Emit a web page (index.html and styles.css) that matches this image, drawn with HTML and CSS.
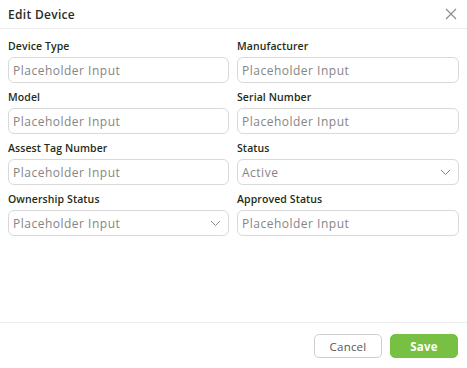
FILE: index.html
```html
<!DOCTYPE html>
<html>
<head>
<meta charset="utf-8">
<link rel="stylesheet" href="styles.css">
</head>
<body>
<div class="modal">
  <header class="head">
    <div class="title">Edit Device</div>
    <button class="close" aria-label="Close">
      <svg width="12" height="12" viewBox="0 0 12 12"><path d="M1 1L11 11M11 1L1 11" stroke="#8a8a8a" stroke-width="1.1" fill="none"/></svg>
    </button>
  </header>
  <main class="body">
    <div class="grid">
      <div class="field"><label>Device Type</label><div class="input">Placeholder Input</div></div>
      <div class="field"><label>Manufacturer</label><div class="input">Placeholder Input</div></div>
      <div class="field"><label>Model</label><div class="input">Placeholder Input</div></div>
      <div class="field"><label>Serial Number</label><div class="input">Placeholder Input</div></div>
      <div class="field"><label>Assest Tag Number</label><div class="input">Placeholder Input</div></div>
      <div class="field"><label>Status</label><div class="input select">Active<svg class="chev" width="11" height="7" viewBox="0 0 11 7"><path d="M1 1L5.5 5.5L10 1" stroke="#8a8a8a" stroke-width="1" fill="none"/></svg></div></div>
      <div class="field"><label>Ownership Status</label><div class="input select">Placeholder Input<svg class="chev" width="11" height="7" viewBox="0 0 11 7"><path d="M1 1L5.5 5.5L10 1" stroke="#8a8a8a" stroke-width="1" fill="none"/></svg></div></div>
      <div class="field"><label>Approved Status</label><div class="input">Placeholder Input</div></div>
    </div>
  </main>
  <footer class="foot">
    <button class="btn cancel">Cancel</button>
    <button class="btn save">Save</button>
  </footer>
</div>
</body>
</html>
```
FILE: styles.css
```css
html, body { margin: 0; padding: 0; background: #fff; }
body { font-family: "Open Sans", "Liberation Sans", sans-serif; }
.modal { display: flex; flex-direction: column; height: 368px; width: 467px; box-sizing: border-box; }
.head { height: 29px; box-sizing: border-box; border-bottom: 1px solid #ededed; display: flex; align-items: center; justify-content: space-between; padding: 0 10px 0 8px; }
.title { font-size: 12px; font-weight: 600; color: #2b2b2b; letter-spacing: 0.3px; }
.close { border: 0; background: none; padding: 0; width: 12px; height: 12px; display: flex; }
.body { flex: 1; padding: 9px 8px 0 8px; }
.grid { display: grid; grid-template-columns: 221px 222px; column-gap: 8px; row-gap: 6px; }
.field { display: flex; flex-direction: column; }
.field label { font-size: 10.5px; font-weight: 600; color: #1f2d17; line-height: 16px; margin-bottom: 3px; letter-spacing: 0.1px; }
.input { height: 26px; box-sizing: border-box; border: 1px solid #d9d9d9; border-radius: 6px; padding: 0 4px 0 4px; display: flex; align-items: center; font-size: 12px; letter-spacing: 0.5px; color: #858585; }
.select { justify-content: space-between; padding-right: 7px; }
.foot { border-top: 1px solid #ececec; padding: 11px 9px 10px; display: flex; justify-content: flex-end; gap: 8px; }
.btn { width: 68px; height: 24px; border-radius: 5px; font-family: inherit; font-size: 11.5px; letter-spacing: 0.2px; display: flex; align-items: center; justify-content: center; padding: 0; }
.cancel { background: #fff; border: 1px solid #cfcfcf; color: #555; }
.save { background: #77c043; border: 1px solid #77c043; color: #fff; font-weight: 700; }
```
